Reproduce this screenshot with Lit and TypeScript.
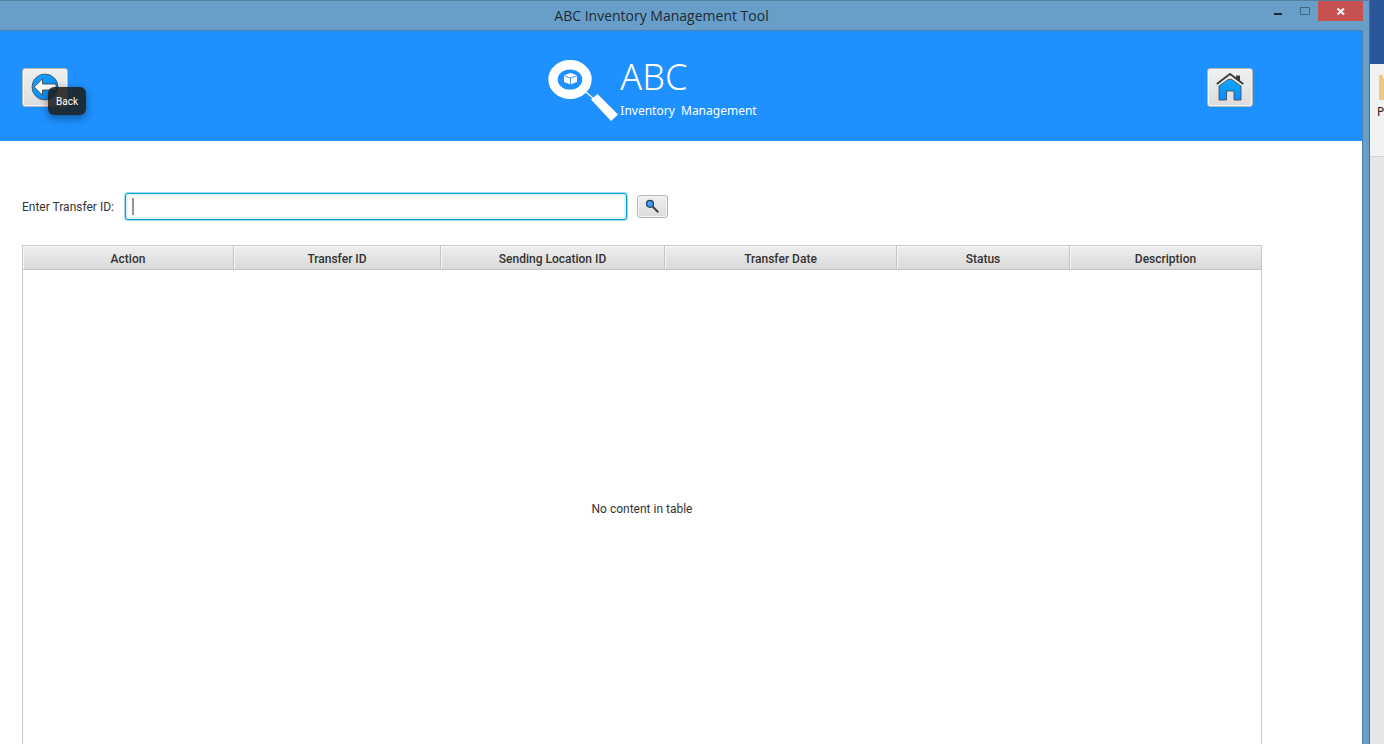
import { LitElement, html, css, svg } from "lit";
import { customElement, property, state } from "lit/decorators.js";

interface Column {
  label: string;
  share: number;
}

const COLUMNS: Column[] = [
  { label: "Action", share: 211 },
  { label: "Transfer ID", share: 207 },
  { label: "Sending Location ID", share: 224 },
  { label: "Transfer Date", share: 232 },
  { label: "Status", share: 173 },
  { label: "Description", share: 191 },
];

const backIcon = svg`
  <defs>
    <linearGradient id="bg" x1="0" y1="0" x2="1" y2="1">
      <stop offset="0" stop-color="#18a6ff" /><stop offset="1" stop-color="#0084f0" />
    </linearGradient>
  </defs>
  <circle cx="14" cy="14" r="13" fill="url(#bg)" stroke="#47586a" stroke-width=".9" />
  <path d="M3.200 14 L11.500 5.800 V11 H25 V17 H11.500 V22.200 Z" fill="#fff" stroke="#3f4a54" stroke-width=".9" />`;

const homeIcon = svg`
  <defs>
    <linearGradient id="hg" x1="0" y1="0" x2="0" y2="1">
      <stop offset="0" stop-color="#12a4ff" /><stop offset="1" stop-color="#0a8cfa" />
    </linearGradient>
  </defs>
  <path d="M20 2.500 H24 V9 L20 5.500 Z" fill="#3c3c3c" />
  <path d="M.8 11 L14 1 L27.200 11" fill="none" stroke="#3c3c3c" stroke-width="2" />
  <path d="M2.500 12.700 L14 3.800 L25.500 12.700" fill="none" stroke="#f4f4f4" stroke-width="1.600" />
  <path d="M3 13 L12 6.600 Q14 5.600 16 6.600 L25 13 V27 H18 V18 H10.500 V27 H3 Z" fill="url(#hg)" stroke="#44505a" stroke-width=".9" />`;

@customElement("window-frame")
export class WindowFrame extends LitElement {
  static styles = css`
    :host {
      display: flex;
      flex-direction: column;
      min-width: 0;
      box-sizing: border-box;
      border-top: 1px solid #54809f;
      border-right: 1px solid #44719c;
      padding-right: 6px;
      background: #689fc9;
      overflow: hidden;
    }
    .bar {
      position: relative;
      flex: none;
      height: 29px;
      display: flex;
      justify-content: center;
      padding-right: 40px;
    }
    .title {
      margin: 0;
      font: 400 14px/29px "Open Sans", "Noto Sans", sans-serif;
      color: #1f2a33;
    }
    .controls {
      position: absolute;
      top: 0;
      right: 0;
      display: flex;
    }
    .control {
      width: 27px;
      height: 20px;
      padding: 0;
      border: 0;
      background: none;
      display: block;
    }
    .close {
      width: 45px;
      background: #c75050;
    }
    .glyph {
      display: block;
      margin: auto;
    }
    .content {
      flex: 1;
      min-height: 0;
      overflow: hidden;
      background: #fff;
      border-top: 1px solid #5081ac;
      border-right: 1px solid #5081ac;
    }
  `;

  @property() heading = "";

  render() {
    return html`
      <header class="bar">
        <h1 class="title">${this.heading}</h1>
        <div class="controls">
          <button class="control" aria-label="Minimize">
            <svg class="glyph" width="27" height="20"><path d="M10 12h8v2h-8z" fill="#20262b" /></svg>
          </button>
          <button class="control" aria-label="Maximize">
            <svg class="glyph" width="27" height="20">
              <rect x="9.500" y="6.500" width="9" height="7" fill="none" stroke="#456580" />
            </svg>
          </button>
          <button class="control close" aria-label="Close">
            <svg class="glyph" width="45" height="20">
              <path d="M19.500 7.500 L26 13.500 M26 7.500 L19.500 13.500" stroke="#fff" stroke-width="1.800" />
            </svg>
          </button>
        </div>
      </header>
      <div class="content"><slot></slot></div>
    `;
  }
}

@customElement("brand-logo")
export class BrandLogo extends LitElement {
  static styles = css`
    :host {
      display: flex;
      color: #fff;
    }
    .mark {
      display: block;
      width: 72px;
      height: 64px;
      flex: none;
    }
    .words {
      display: flex;
      flex-direction: column;
      white-space: nowrap;
    }
    .name {
      font: 300 36px/34px "Noto Sans", "Open Sans", sans-serif;
    }
    .tagline {
      font: 400 12px/16px "Noto Sans", sans-serif;
      padding-top: 9px;
    }
  `;

  render() {
    return html`
      <svg class="mark" viewBox="0 0 72 64" aria-hidden="true">
        <ellipse cx="22" cy="19.500" rx="17" ry="14.800" fill="none" stroke="#fff" stroke-width="9.400" />
        <path d="M22.500 13 L29 15.300 V22 L22.500 24.500 L16 22 V15.300 Z" fill="#fff" />
        <path d="M16 15.800 L22.500 18 L29 15.800 M22.500 18 V24.500" fill="none" stroke="#1e90ff" stroke-width=".9" />
        <path d="M38 32 L47 40" stroke="#fff" stroke-width="1.200" />
        <path d="M43 39.500 L49.500 34 L70 54.500 L63 61 Z" fill="#fff" />
      </svg>
      <div class="words">
        <span class="name">ABC</span>
        <span class="tagline">Inventory&nbsp; Management</span>
      </div>
    `;
  }
}

@customElement("transfer-table")
export class TransferTable extends LitElement {
  static styles = css`
    :host {
      display: block;
    }
    .table {
      width: 100%;
      table-layout: fixed;
      border-collapse: separate;
      border-spacing: 0;
      border: 1px solid #c8c8c8;
      font: 400 12px/16px Roboto, sans-serif;
      color: #333;
    }
    .head {
      box-sizing: border-box;
      height: 24px;
      padding: 2px 0 0;
      font-weight: 500;
      text-align: center;
      background: linear-gradient(#efefef, #d9d9d9);
      border-right: 1px solid #c4c4c4;
      border-bottom: 1px solid #c4c4c4;
      box-shadow: inset 1px 1px 0 #f8f8f8;
    }
    .head:last-child {
      border-right: 0;
    }
    .empty {
      height: calc(100vh - 266px);
      padding: 0;
      text-align: center;
      vertical-align: middle;
    }
  `;

  @property({ attribute: false }) columns: Column[] = [];

  render() {
    const total = this.columns.reduce((sum, c) => sum + c.share, 0);
    return html`
      <table class="table">
        <colgroup>
          ${this.columns.map((c) => html`<col style="width:${(c.share / total) * 100}%" />`)}
        </colgroup>
        <thead>
          <tr>
            ${this.columns.map((c) => html`<th class="head" scope="col">${c.label}</th>`)}
          </tr>
        </thead>
        <tbody>
          <tr>
            <td class="empty" colspan=${this.columns.length}>No content in table</td>
          </tr>
        </tbody>
      </table>
    `;
  }
}

@customElement("app-root")
export class AppRoot extends LitElement {
  static styles = css`
    :host {
      display: grid;
      grid-template-columns: minmax(0, 1fr) 14px;
      height: 100vh;
      overflow: hidden;
      font: 400 12px/16px Roboto, sans-serif;
      color: #333;
    }
    .banner {
      display: flex;
      justify-content: space-between;
      align-items: flex-start;
      box-sizing: border-box;
      height: 110px;
      padding: 29px 109px 0 22px;
      background: #1e90ff;
    }
    .logo {
      padding-left: 30px;
    }
    .slot {
      position: relative;
      padding-top: 8px;
    }
    .tool {
      display: flex;
      align-items: center;
      justify-content: center;
      box-sizing: border-box;
      width: 46px;
      height: 39px;
      padding: 0 0 2px;
      border: 1px solid #b4b8bc;
      border-radius: 3px;
      background: linear-gradient(#f0f0f0, #dcdcdc);
      box-shadow: inset 0 0 0 1px #f4f4f4;
    }
    .tooltip {
      position: absolute;
      left: 26px;
      top: 27px;
      padding: 7px 8px 5px;
      border-radius: 6px;
      background: rgba(30, 30, 30, 0.88);
      color: #fff;
      font-size: 10px;
      box-shadow: 0 3px 8px rgba(0, 0, 0, 0.4);
    }
    .page {
      padding: 52px 100px 0 22px;
    }
    .search {
      display: flex;
      align-items: center;
      gap: 10px;
      margin-bottom: 25px;
    }
    .label {
      min-width: 93px;
    }
    .field {
      position: relative;
      display: flex;
    }
    .input {
      box-sizing: border-box;
      width: 502px;
      height: 27px;
      padding: 0 8px;
      border: 1px solid #039ed3;
      border-radius: 3px;
      outline: none;
      font: inherit;
      color: #333;
      background: #fff;
      box-shadow: 0 0 0 1px #9bd9ee, inset 0 0 0 2px #e0f4fa;
    }
    .caret {
      position: absolute;
      left: 7px;
      top: 5px;
      width: 2px;
      height: 17px;
      background: #959595;
    }
    .find {
      width: 31px;
      height: 23px;
      padding: 0;
      border-color: #b5b5b5;
    }
    .desktop {
      display: flex;
      flex-direction: column;
      background: #e6e6e6;
      overflow: hidden;
    }
    .ribbon {
      height: 64px;
      background: #2b579a;
    }
    .shelf {
      box-sizing: border-box;
      height: 93px;
      padding: 11px 0 0 7px;
      background: #f2f2f2;
      border-bottom: 1px solid #d2d2d2;
      font: 400 12px/16px "Noto Sans", sans-serif;
      color: #222;
    }
    .folder {
      display: block;
      margin-bottom: 3px;
    }
  `;

  @state() private transferId = "";

  render() {
    return html`
      <window-frame heading="ABC Inventory Management Tool">
        <div class="banner">
          <div class="slot">
            <button class="tool" aria-label="Back">
              <svg width="28" height="28" viewBox="0 0 28 28">${backIcon}</svg>
            </button>
            <span class="tooltip" role="tooltip">Back</span>
          </div>
          <brand-logo class="logo"></brand-logo>
          <div class="slot">
            <button class="tool" aria-label="Home">
              <svg width="28" height="28" viewBox="0 0 28 28">${homeIcon}</svg>
            </button>
          </div>
        </div>
        <main class="page">
          <form class="search" @submit=${(e: Event) => e.preventDefault()}>
            <label class="label" for="transfer">Enter Transfer ID:</label>
            <div class="field">
              <input
                id="transfer"
                class="input"
                type="text"
                autocomplete="off"
                .value=${this.transferId}
                @input=${(e: Event) => (this.transferId = (e.target as HTMLInputElement).value)}
              />
              ${this.transferId ? "" : html`<span class="caret"></span>`}
            </div>
            <button class="tool find" aria-label="Search">
              <svg width="15" height="15" viewBox="0 0 15 15">
                <path d="M7.500 7.500 L13.300 13.300" stroke="#444" stroke-width="2" />
                <circle cx="5" cy="4.800" r="3.500" fill="#2f9bff" stroke="#2e3f50" stroke-width="1.200" />
                <path d="M3.500 4.600 L4.800 3.300" stroke="#bfe2ff" />
              </svg>
            </button>
          </form>
          <transfer-table .columns=${COLUMNS}></transfer-table>
        </main>
      </window-frame>
      <aside class="desktop">
        <div class="ribbon"></div>
        <div class="shelf">
          <svg class="folder" width="7" height="26"><path d="M2 0 h4 v3 h1 v22 h-5 z" fill="#efc981" /></svg>
          P
        </div>
      </aside>
    `;
  }
}
